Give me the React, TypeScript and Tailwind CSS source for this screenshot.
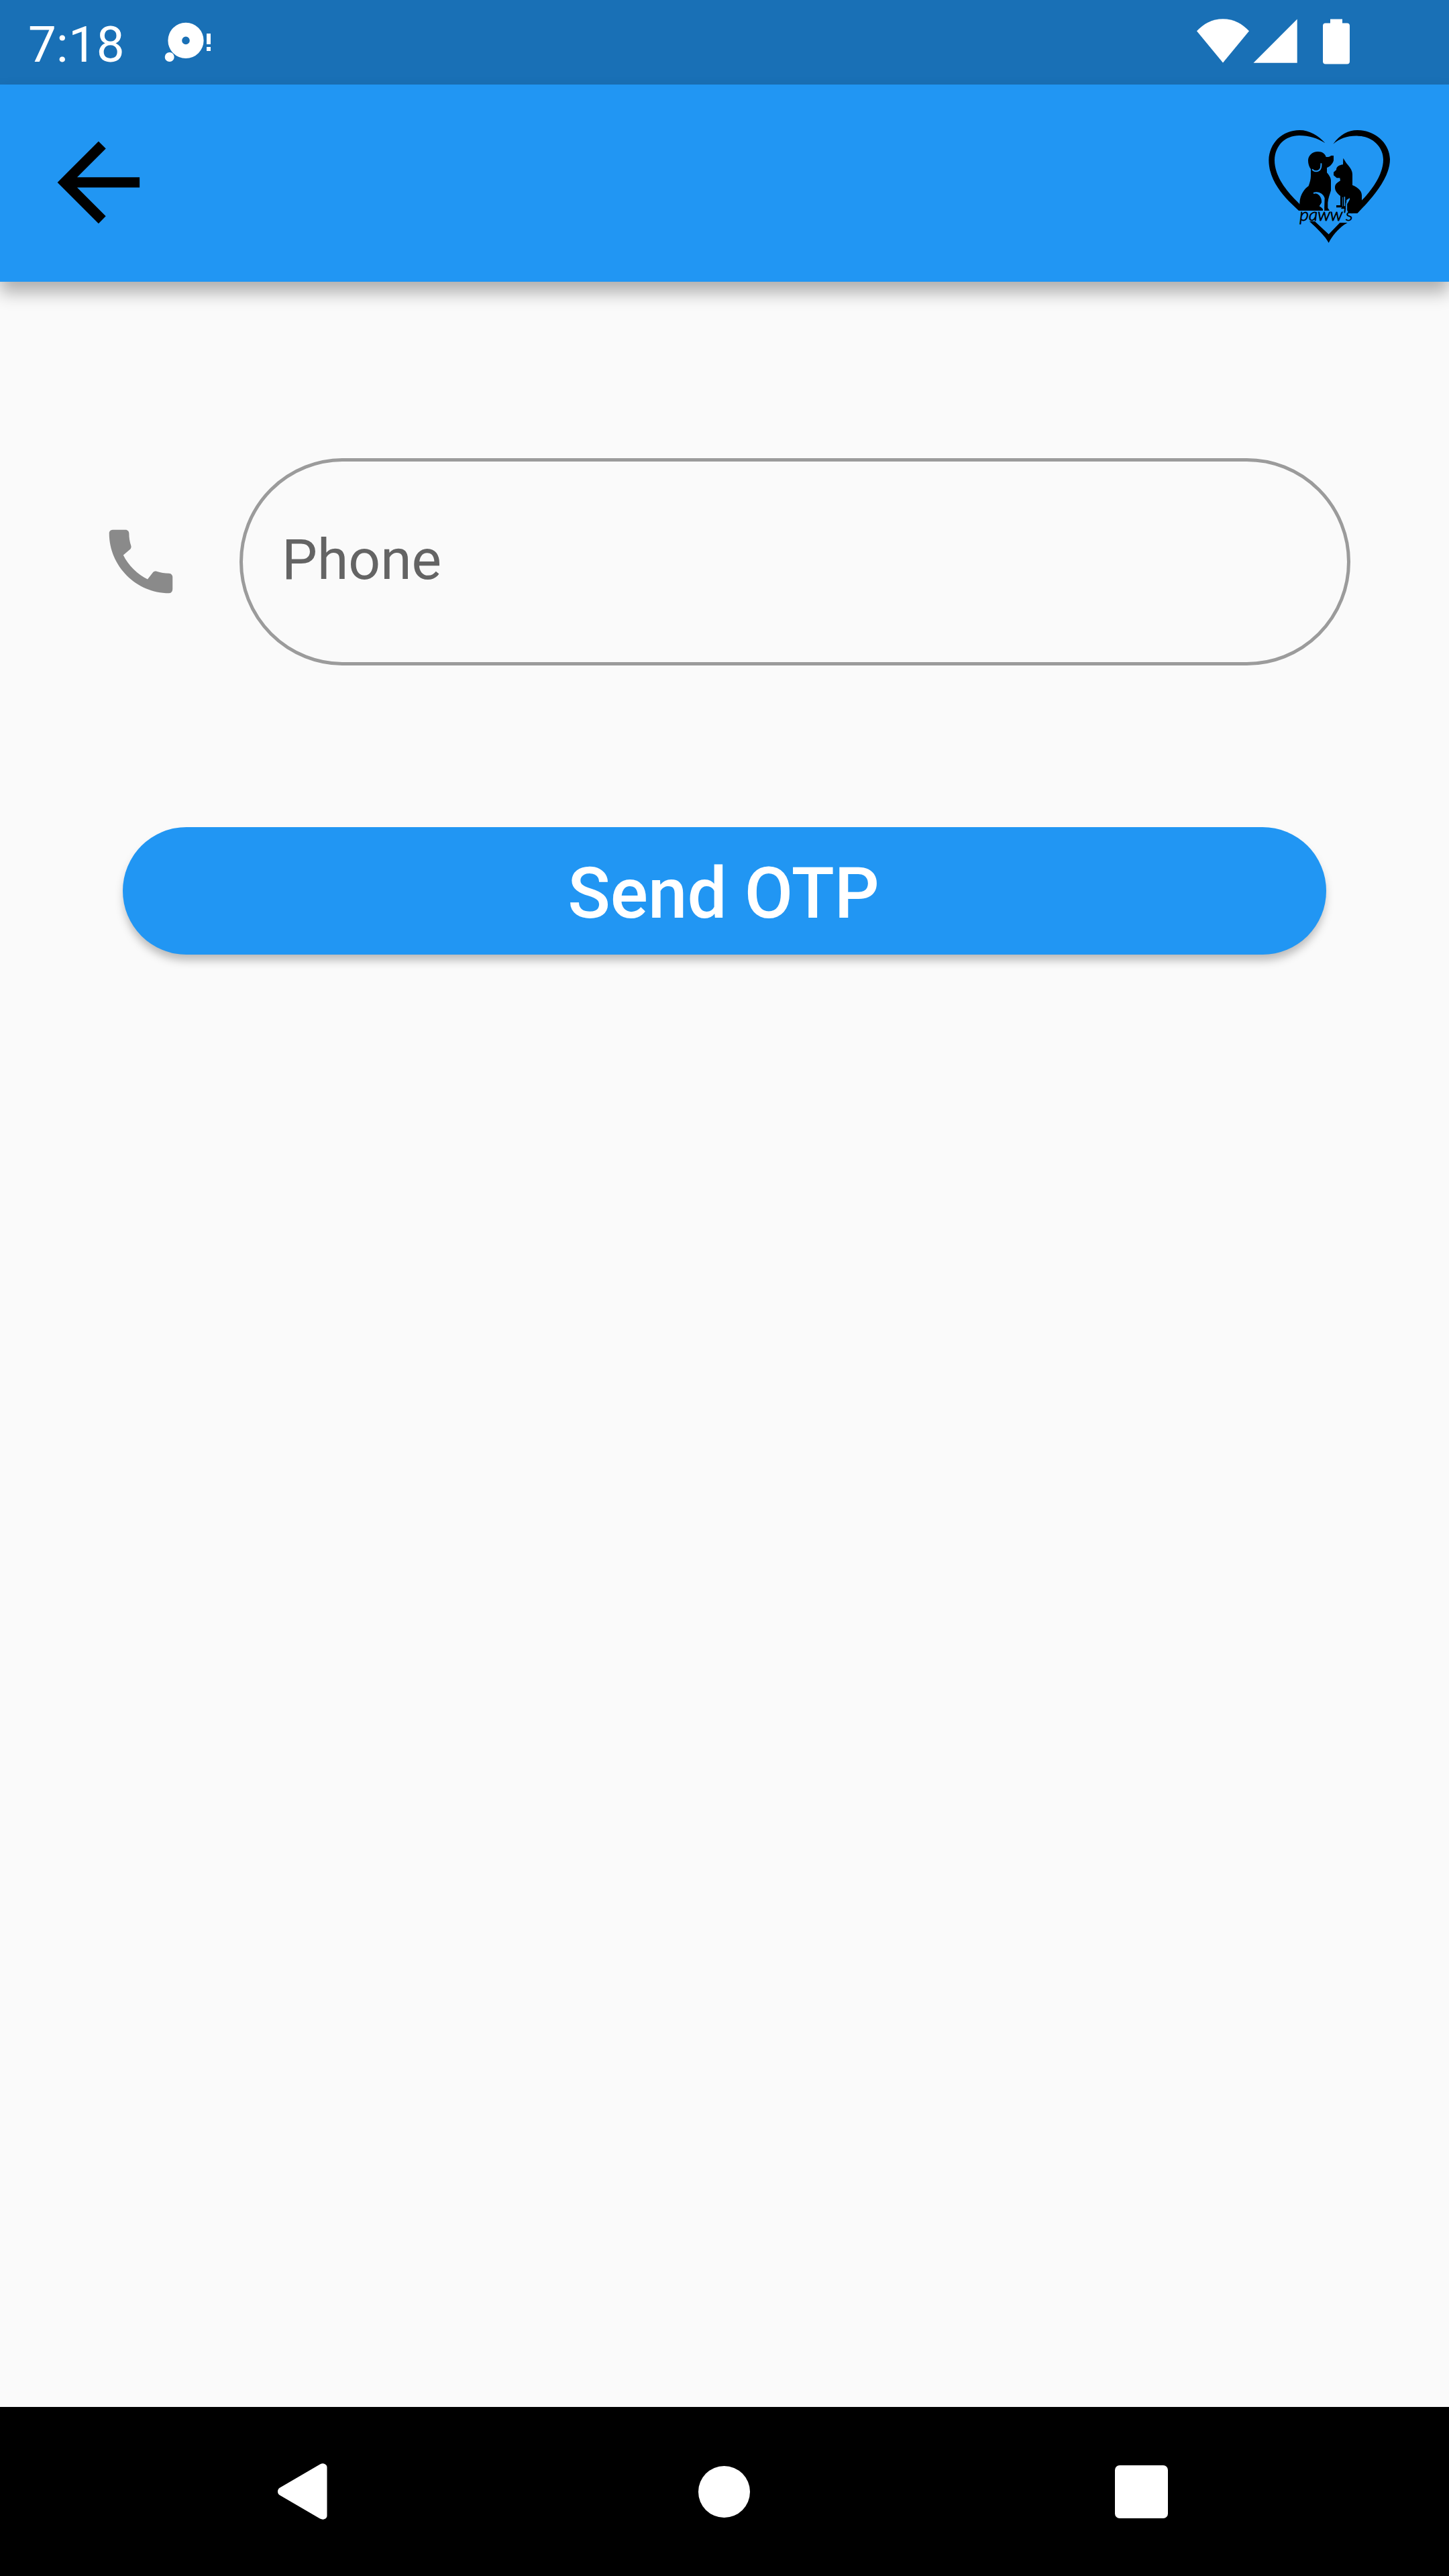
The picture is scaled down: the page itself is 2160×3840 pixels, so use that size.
import React from "react";

function StatusBar() {
  return (
    <div className="flex h-[126px] shrink-0 items-start bg-[#1970b6] text-white">
      <span className="ml-[42px] mt-[22px] w-[150px] text-[74.5px] leading-[90px]">7:18</span>
      <svg className="ml-[50px] mt-[30px]" width="76" height="66" viewBox="242 30 76 66" fill="#fff">
        <path
          fillRule="evenodd"
          d="M277 33.8a26.6 26.6 0 1 0 0 53.200a26.600 26.600 0 1 0 0-53.200zM277 54.600a5.800 5.800 0 1 1 0 11.600a5.800 5.800 0 1 1 0-11.600z"
        />
        <circle cx="252.700" cy="85" r="7" />
        <rect x="308" y="50" width="6" height="16" />
        <rect x="308" y="70" width="6" height="6" />
      </svg>
      <svg className="ml-auto mr-[148px] mt-[26px]" width="230" height="72" viewBox="1782 26 230 72" fill="#fff">
        <path d="M1823 93.500L1784 46.200C1794 35.500 1807 28.200 1823 28.200S1852 35.500 1862 46.200Z" />
        <path d="M1868.500 93.700L1933.700 28.500V93.700Z" />
        <path d="M1983 28.500H2001V34.500H2008Q2012 34.500 2012 38.500V91.500Q2012 95.500 2008 95.500H1976Q1972 95.500 1972 91.500V38.500Q1972 34.500 1976 34.500H1983Z" />
      </svg>
    </div>
  );
}

function PawsLogo() {
  return (
    <svg className="mr-[60px] mt-[4px]" width="240" height="210" viewBox="0 0 720 630" fill="#000">
      {/* heart outline */}
      <path d="M346 130C316 96 276 72 232 72C154 72 96 130 94 206C94 282 140 344 184 390L228 432H262L240 410C190 362 120 290 120 206C122 140 168 96 230 96C276 96 312 108 346 130Z" />
      <path d="M382 134C412 92 450 72 490 72C570 72 634 130 636 202C636 276 576 350 530 402L490 444L500 396C552 346 606 272 606 204C606 146 556 99 494 98C448 96 414 108 382 134Z" />
      <path d="M276 480H300L362 538L412 486H446L430 496C404 516 378 544 362 576C346 546 312 514 276 480Z" />
      {/* dog */}
      <path d="M314 168C334 168 346 178 350 192C360 193 368 191 372 186H384V208C380 222 368 236 354 240V262C362 272 372 284 372 298V342C366 362 360 376 358 396V420L366 432H342L344 376C338 358 322 346 294 352C318 356 332 372 330 396L320 412L336 422V432H232V398C234 360 254 334 272 322C278 304 282 292 282 276V246C274 236 270 222 270 208C270 186 288 168 314 168Z" />
      <path d="M288 247C298 258 312 259 322 249C329 241 329 232 328 220" fill="none" stroke="#2196f3" strokeWidth="6" />
      <path d="M294 354C320 346 338 362 338 380V400L328 412L342 428" fill="none" stroke="#2196f3" strokeWidth="6" />
      {/* cat */}
      <path d="M427 197L440 218C454 234 468 250 468 270V318C492 328 510 342 510 364V414L490 444H452L444 430V402C452 392 456 384 456 376L442 384L438 424H416L426 412V372H424V418H396V408H414V366C400 356 390 344 390 328C390 312 402 306 414 298L412 286H398L384 274V260L396 250C396 236 408 228 426 226Z" />
      <path d="M455 378L442 400V436M433 370V412" fill="none" stroke="#2196f3" strokeWidth="5" />
      <text
        x="232"
        y="478"
        fontSize="74"
        fontStyle="italic"
        fontWeight="300"
        textLength="238"
        lengthAdjust="spacingAndGlyphs"
        stroke="#000"
        strokeWidth="2.5"
        className="font-['Lato',sans-serif]"
      >
        paww's
      </text>
    </svg>
  );
}

function AppBar() {
  return (
    <header className="z-10 flex h-[294px] shrink-0 items-center justify-between bg-[#2196f3] shadow-[0_16px_24px_rgba(0,0,0,0.3)]">
      <button aria-label="Back" className="flex h-[294px] w-[294px] items-center justify-center pb-[2px]">
        <svg width="183.750" height="183.750" viewBox="0 0 24 24" fill="#000">
          <path d="M20 11H7.830l5.590-5.590L12 4l-8 8 8 8 1.410-1.410L7.830 13H20v-2z" />
        </svg>
      </button>
      <PawsLogo />
    </header>
  );
}

function NavBar() {
  return (
    <nav className="flex h-[252px] shrink-0 items-center bg-black">
      <svg className="ml-[414px]" width="74" height="84" viewBox="0 0 74 84" fill="#fff">
        <path d="M3 36.500L63 1.500Q67 -0.500 70 1Q73.500 2.500 73.500 6V78Q73.500 81.500 70 83Q67 84.500 63 82.500L3 47.500Q0 45.500 0 42Q0 38.500 3 36.500Z" />
      </svg>
      <div className="ml-[553px] h-[77px] w-[77px] rounded-full bg-white" />
      <div className="ml-[544px] h-[79px] w-[79px] rounded-[7px] bg-white" />
    </nav>
  );
}

export default function App() {
  return (
    <div className="flex h-[3840px] w-[2160px] flex-col overflow-hidden bg-[#fafafa] font-['Roboto',sans-serif]">
      <StatusBar />
      <AppBar />
      <main className="flex grow flex-col">
        <div className="mx-[147px] mt-[263px] flex h-[309px] items-center gap-[84px]">
          <svg className="mb-[2px] shrink-0" width="126" height="126" viewBox="0 0 24 24" fill="#8a8a8a">
            <path d="M20.010 15.380c-1.230 0-2.420-.2-3.530-.56-.35-.12-.74-.03-1.010.24l-1.570 1.970c-2.830-1.350-5.480-3.900-6.890-6.830l1.950-1.660c.27-.28.350-.67.240-1.020-.37-1.110-.56-2.300-.56-3.530 0-.54-.45-.99-.99-.99H4.190C3.650 3 3 3.240 3 3.990 3 13.280 10.730 21 20.010 21c.71 0 .99-.63.990-1.180v-3.450c0-.54-.45-.99-.99-.99z" />
          </svg>
          <div className="flex h-full grow items-center rounded-full border-[5px] border-[#9b9b9b] pb-[6px] pl-[58px] text-[84px] leading-[98px] text-[#646464]">
            Phone
          </div>
        </div>
        <button className="mx-[183px] mt-[241px] flex h-[190px] items-center justify-center rounded-full bg-[#2196f3] pr-[3px] pt-[10px] text-[105px] font-medium leading-[122px] text-white shadow-[0_10px_14px_-2px_rgba(0,0,0,0.27)]">
          Send OTP
        </button>
      </main>
      <NavBar />
    </div>
  );
}
